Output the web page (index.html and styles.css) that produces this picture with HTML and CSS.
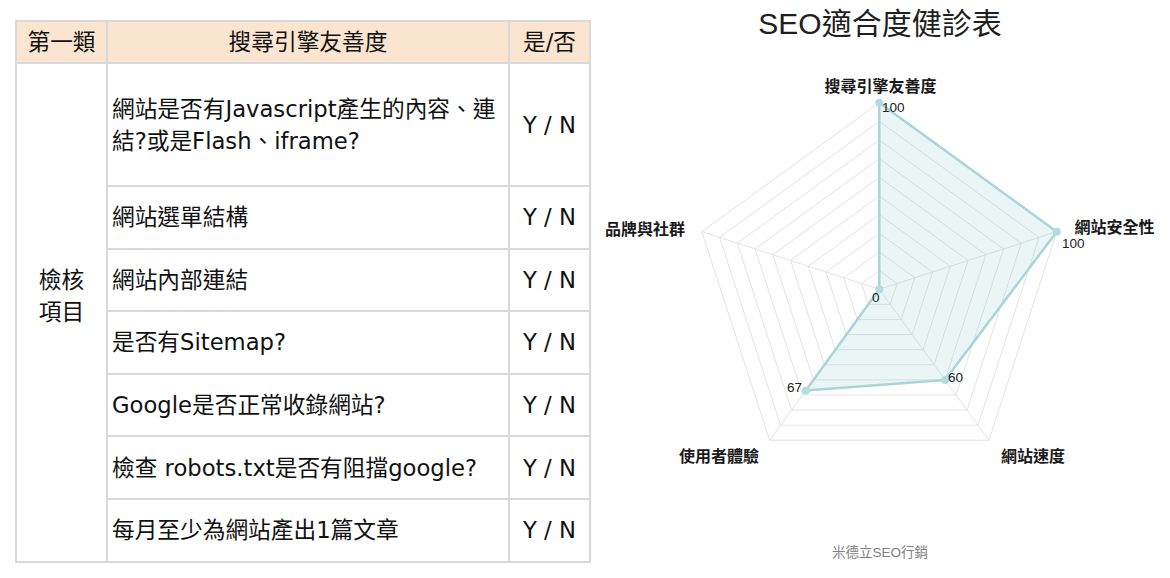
FILE: index.html
```html
<!DOCTYPE html>
<html lang="zh-Hant">
<head>
<meta charset="utf-8">
<title>SEO適合度健診表</title>
<link rel="stylesheet" href="styles.css">
</head>
<body>
<div class="page">
  <section class="left">
    <table class="sheet">
      <colgroup>
        <col class="c1"><col class="c2"><col class="c3">
      </colgroup>
      <thead>
        <tr class="head-row">
          <th>第一類</th>
          <th>搜尋引擎友善度</th>
          <th>是/否</th>
        </tr>
      </thead>
      <tbody>
        <tr class="tall">
          <td class="group" rowspan="7"><span>檢核<br>項目</span></td>
          <td class="item">網站是否有Javascript產生的內容、連結?或是Flash、iframe?</td>
          <td class="yn">Y / N</td>
        </tr>
        <tr class="row"><td class="item">網站選單結構</td><td class="yn">Y / N</td></tr>
        <tr class="row"><td class="item">網站內部連結</td><td class="yn">Y / N</td></tr>
        <tr class="row"><td class="item">是否有Sitemap?</td><td class="yn">Y / N</td></tr>
        <tr class="row"><td class="item">Google是否正常收錄網站?</td><td class="yn">Y / N</td></tr>
        <tr class="row"><td class="item">檢查 robots.txt是否有阻擋google?</td><td class="yn">Y / N</td></tr>
        <tr class="row"><td class="item">每月至少為網站產出1篇文章</td><td class="yn">Y / N</td></tr>
      </tbody>
    </table>
  </section>

  <section class="right">
    <h1 class="title">SEO適合度健診表</h1>
    <svg class="radar" width="580" height="420" viewBox="0 0 580 420">
      <g transform="translate(289.3 229.3)">
        <g class="rings">
          <polygon points="0,-186.6 177.47,-57.66 109.68,150.96 -109.68,150.96 -177.47,-57.66" transform="scale(0.1)" vector-effect="non-scaling-stroke"/>
          <polygon points="0,-186.6 177.47,-57.66 109.68,150.96 -109.68,150.96 -177.47,-57.66" transform="scale(0.2)" vector-effect="non-scaling-stroke"/>
          <polygon points="0,-186.6 177.47,-57.66 109.68,150.96 -109.68,150.96 -177.47,-57.66" transform="scale(0.3)" vector-effect="non-scaling-stroke"/>
          <polygon points="0,-186.6 177.47,-57.66 109.68,150.96 -109.68,150.96 -177.47,-57.66" transform="scale(0.4)" vector-effect="non-scaling-stroke"/>
          <polygon points="0,-186.6 177.47,-57.66 109.68,150.96 -109.68,150.96 -177.47,-57.66" transform="scale(0.5)" vector-effect="non-scaling-stroke"/>
          <polygon points="0,-186.6 177.47,-57.66 109.68,150.96 -109.68,150.96 -177.47,-57.66" transform="scale(0.6)" vector-effect="non-scaling-stroke"/>
          <polygon points="0,-186.6 177.47,-57.66 109.68,150.96 -109.68,150.96 -177.47,-57.66" transform="scale(0.7)" vector-effect="non-scaling-stroke"/>
          <polygon points="0,-186.6 177.47,-57.66 109.68,150.96 -109.68,150.96 -177.47,-57.66" transform="scale(0.8)" vector-effect="non-scaling-stroke"/>
          <polygon points="0,-186.6 177.47,-57.66 109.68,150.96 -109.68,150.96 -177.47,-57.66" transform="scale(0.9)" vector-effect="non-scaling-stroke"/>
          <polygon points="0,-186.6 177.47,-57.66 109.68,150.96 -109.68,150.96 -177.47,-57.66"/>
        </g>
        <g class="spokes">
          <line x1="0" y1="0" x2="0" y2="-186.6"/>
          <line x1="0" y1="0" x2="177.47" y2="-57.66"/>
          <line x1="0" y1="0" x2="109.68" y2="150.96"/>
          <line x1="0" y1="0" x2="-109.68" y2="150.96"/>
          <line x1="0" y1="0" x2="-177.47" y2="-57.66"/>
        </g>
        <polygon class="area" points="0,-186.6 177.47,-57.66 65.81,90.58 -73.49,101.14 0,0"/>
        <g class="dots">
          <circle cx="0" cy="-186.6" r="4"/>
          <circle cx="177.47" cy="-57.66" r="4"/>
          <circle cx="65.81" cy="90.58" r="4"/>
          <circle cx="-73.49" cy="101.14" r="4"/>
          <circle cx="0" cy="0" r="4"/>
        </g>
      </g>
      <g class="axis-labels">
        <text x="290.5" y="25" text-anchor="middle">搜尋引擎友善度</text>
        <text x="484.6" y="166" text-anchor="start">網站安全性</text>
        <text x="95" y="168" text-anchor="end">品牌與社群</text>
        <text x="169" y="395" text-anchor="end">使用者體驗</text>
        <text x="411" y="395" text-anchor="start">網站速度</text>
      </g>
      <g class="values">
        <text x="292" y="47">100</text>
        <text x="472" y="183">100</text>
        <text x="282" y="237">0</text>
        <text x="358" y="317">60</text>
        <text x="197" y="327">67</text>
      </g>
    </svg>
    <p class="credit">米德立SEO行銷</p>
  </section>
</div>
</body>
</html>
```

FILE: styles.css
```css
html, body {
  margin: 0;
  padding: 0;
  background: #ffffff;
}

.page {
  display: flex;
  width: 1170px;
  height: 578px;
  overflow: hidden;
}

.left {
  width: 590px;
  padding: 20px 0 0 15px;
  box-sizing: border-box;
}

.sheet {
  border-collapse: collapse;
  table-layout: fixed;
  width: 574px;
  font-family: "DejaVu Sans", "Noto Sans CJK TC", sans-serif;
  font-size: 22.7px;
  color: #111111;
}

.sheet col.c1 { width: 91px; }
.sheet col.c2 { width: 402px; }
.sheet col.c3 { width: 81px; }

.sheet th,
.sheet td {
  border: 2px solid #d9d9d9;
  padding: 0 4px;
  line-height: 32px;
}

.sheet th {
  background: #fbe5d0;
  font-weight: normal;
  text-align: center;
  height: 40px;
  padding: 0;
}

.sheet tr.tall td { height: 121px; }
.sheet tr.row td { height: 60.6px; }

.sheet td.group {
  text-align: center;
  vertical-align: middle;
  padding: 0 0 32px 0;
  line-height: 32px;
}

.sheet td.item {
  text-align: left;
  vertical-align: middle;
  padding-left: 4px;
}

.sheet td.yn {
  text-align: center;
  vertical-align: middle;
  padding: 0;
}

.right {
  width: 580px;
  display: flex;
  flex-direction: column;
  align-items: center;
}

.title {
  margin: 6px 0 0 0;
  font-family: "Liberation Sans", "Noto Sans CJK TC", sans-serif;
  font-size: 30px;
  line-height: 36px;
  font-weight: normal;
  color: #1e1e1e;
}

.radar {
  display: block;
  margin-top: 18px;
}

.rings polygon {
  fill: none;
  stroke: #e3e3e3;
  stroke-width: 1;
}

.spokes line {
  stroke: #e3e3e3;
  stroke-width: 1;
}

.area {
  fill: rgba(160, 212, 216, 0.22);
  stroke: #a9d5d8;
  stroke-width: 2.5;
  stroke-linejoin: round;
}

.dots circle {
  fill: #b4dcdf;
}

.axis-labels text {
  font-family: "Noto Sans CJK TC", sans-serif;
  font-weight: bold;
  font-size: 16px;
  fill: #1a1a1a;
  dominant-baseline: central;
}

.values text {
  font-family: "Liberation Sans", "Noto Sans CJK TC", sans-serif;
  font-size: 13.5px;
  fill: #222222;
  dominant-baseline: central;
}

.credit {
  margin: 65px 0 0 0;
  font-family: "Liberation Sans", "Noto Sans CJK TC", sans-serif;
  font-size: 13.5px;
  line-height: 16px;
  color: #808080;
}
```
